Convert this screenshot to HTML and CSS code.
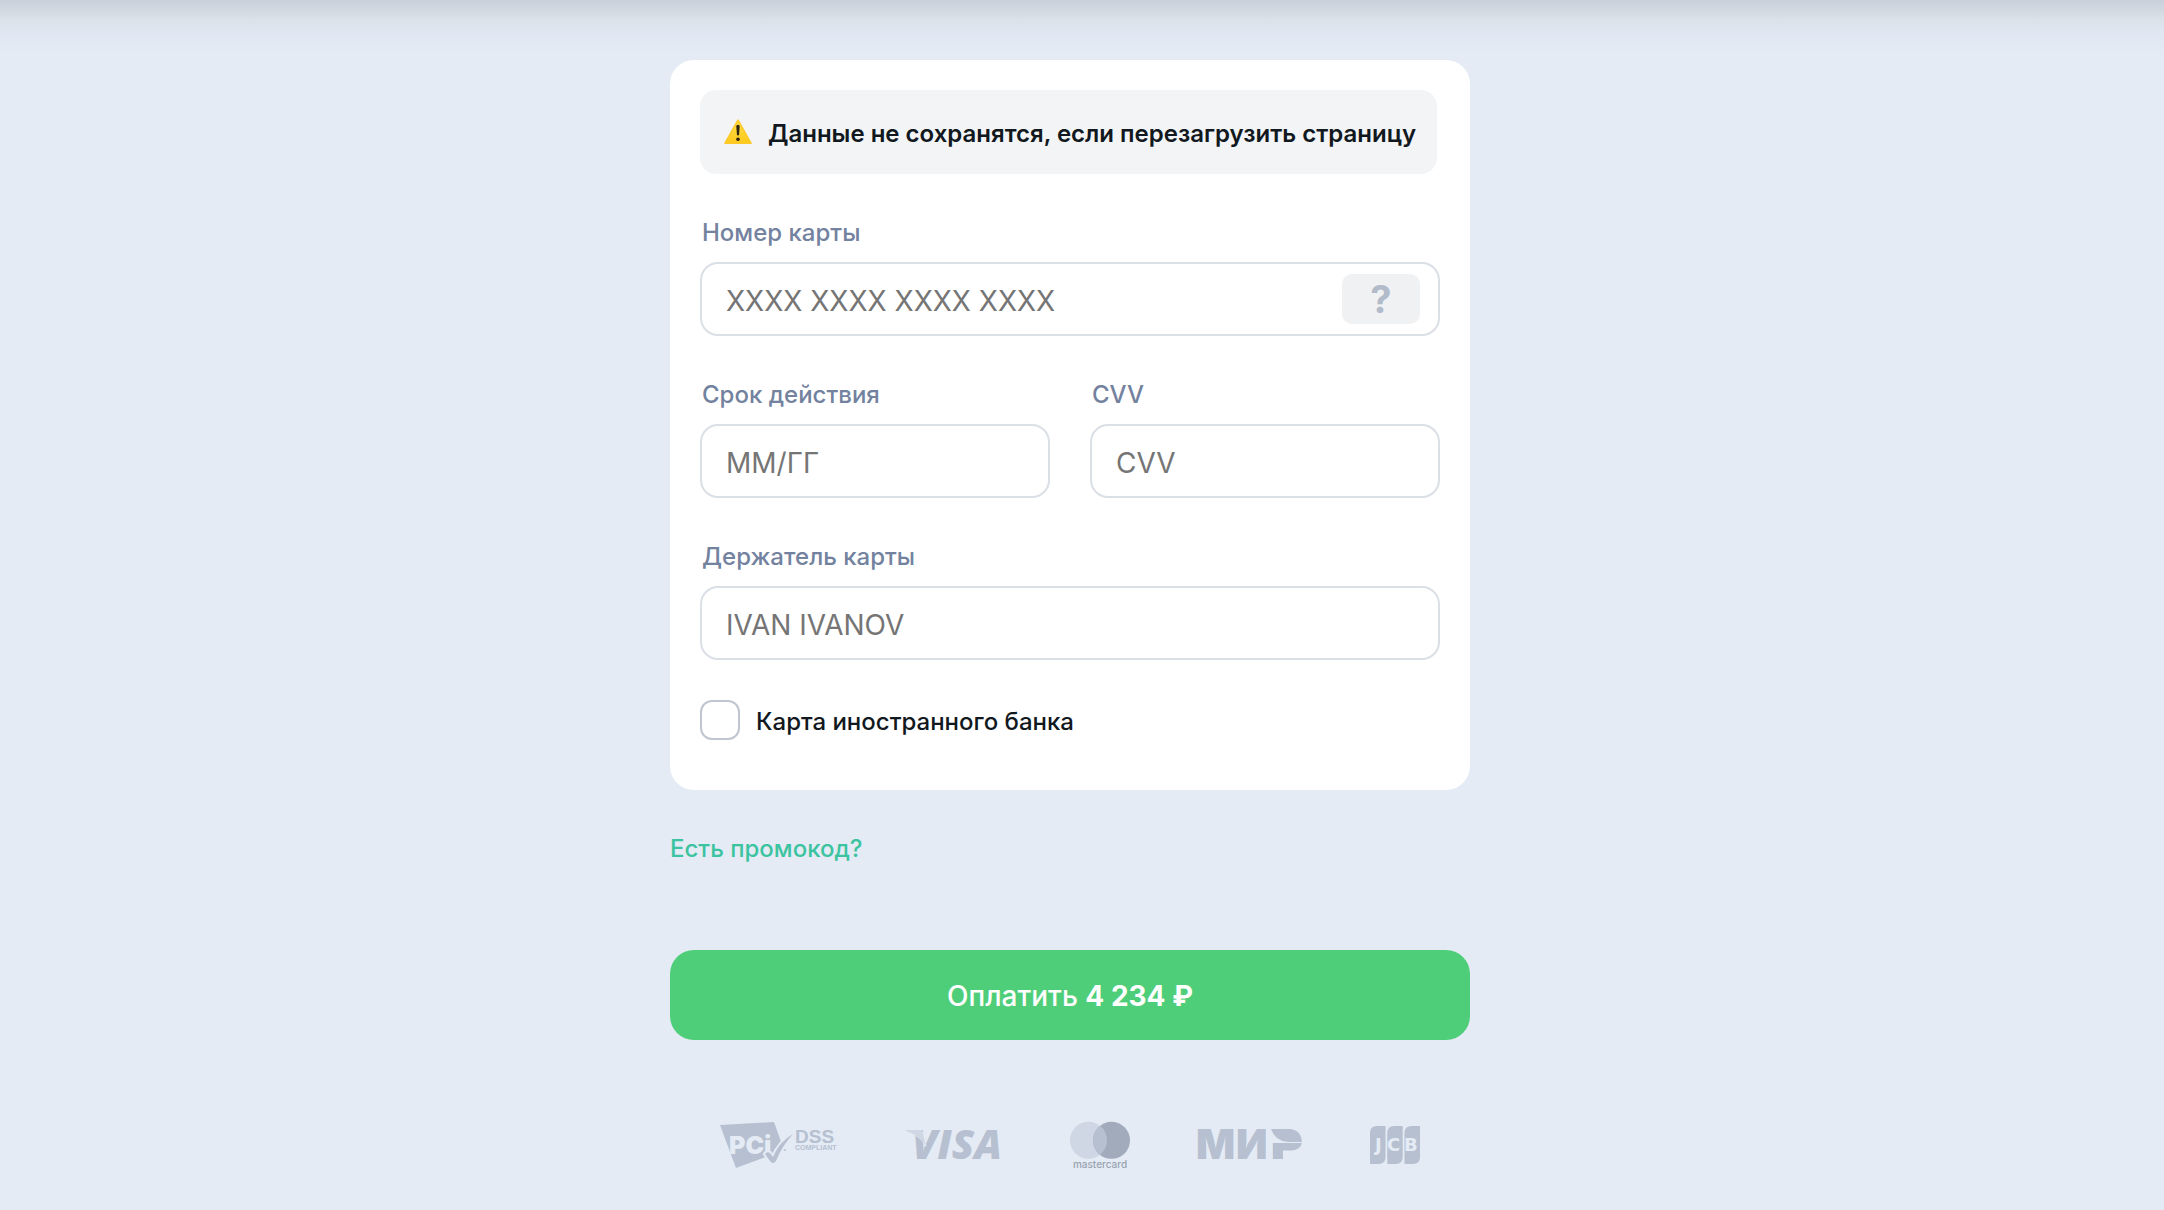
FILE: index.html
```html
<!DOCTYPE html>
<html lang="ru">
<head>
  <meta charset="UTF-8" />
  <meta name="viewport" content="width=device-width, initial-scale=1.0"/>
  <title>Оплата картой</title>
  <link rel="stylesheet" href="styles.css">
</head>
<body>

<main class="page">
  <form class="payment">
    <div class="card">
      <div class="alert">
        <svg class="alert-icon" viewBox="0 0 28 26" aria-hidden="true">
          <defs>
            <linearGradient id="warn" x1="0" y1="0" x2="0" y2="1">
              <stop offset="0" stop-color="#fee04a"/>
              <stop offset="1" stop-color="#fdc81a"/>
            </linearGradient>
          </defs>
          <path d="M14 1.2 27 24.2H1Z" fill="url(#warn)" stroke="#fcc92a" stroke-width="1.6" stroke-linejoin="round"/>
          <path d="M12.3 7.400a1.700 1.700 0 0 1 3.400 0l-.7 8.800h-2Z" fill="#2b2410"/>
          <circle cx="14" cy="20.2" r="1.8" fill="#2b2410"/>
        </svg>
        <span>Данные не сохранятся, если перезагрузить страницу</span>
      </div>

      <div class="field">
        <label for="number">Номер карты</label>
        <div class="input-wrap">
          <input type="text" id="number" placeholder="XXXX XXXX XXXX XXXX">
          <button type="button" class="hint">?</button>
        </div>
      </div>

      <div class="row">
        <div class="field">
          <label for="expiry">Срок действия</label>
          <input type="text" id="expiry" placeholder="ММ/ГГ">
        </div>
        <div class="field">
          <label for="cvv">CVV</label>
          <input type="text" id="cvv" placeholder="CVV">
        </div>
      </div>

      <div class="field">
        <label for="holder">Держатель карты</label>
        <input type="text" id="holder" placeholder="IVAN IVANOV">
      </div>

      <label class="check" for="foreign">
        <input type="checkbox" id="foreign">
        <span>Карта иностранного банка</span>
      </label>
    </div>

    <a class="promo" href="#">Есть промокод?</a>

    <button type="submit" class="pay">Оплатить <b>4 234 ₽</b></button>
  </form>

  <div class="logos">
    <!-- PCI DSS -->
    <svg width="118" height="50" viewBox="0 0 118 50">
      <path d="M0 5 54 2 64 30 43 38 16 48Z" fill="#b6c0d0"/>
      <text class="pci" x="9" y="34">PCi</text>
      <path d="M45 34q2-3 5-1l3 4q6-15 20-23-11 12-17 27-3 4-6 0Z" fill="#b6c0d0" stroke="#e4ebf5" stroke-width="4" paint-order="stroke"/>
      <circle cx="65" cy="30" r="1" fill="#b6c0d0"/>
      <text class="dss" x="75" y="23">DSS</text>
      <text class="compliant" x="75" y="30">COMPLIANT</text>
    </svg>
    <!-- Visa -->
    <svg width="96" height="50" viewBox="0 0 96 50">
      <text class="visa" x="6" y="39">VISA</text>
      <path d="M0 10H13q3 0 4 4l3 12Q14 15 0 11Z" fill="#cfd7e5" stroke="#e4ebf5" stroke-width="1" paint-order="stroke"/>
    </svg>
    <!-- Mastercard -->
    <svg width="60" height="50" viewBox="0 0 60 50">
      <circle cx="18.5" cy="20.3" r="18.5" fill="#cfd7e5"/>
      <circle cx="41.5" cy="20.3" r="18.5" fill="#a1abbc"/>
      <path d="M30 5.8a18.5 18.5 0 0 1 0 29 18.5 18.5 0 0 1 0-29Z" fill="#b6c0d0"/>
      <text class="mastercard" x="30" y="48">mastercard</text>
    </svg>
    <!-- Мир -->
    <svg width="104" height="50" viewBox="0 0 104 50">
      <text class="mir" y="39" x="-2 38 73">МИР</text>
      <path d="M72 8H106V23H72Z" fill="#e4ebf5"/>
      <path d="M73 9H92Q103 10 104 22H90Q77 21 73 9Z" fill="#b6c0d0"/>
      <path d="M75 23H104Q102 30 94 30.500H85V39H75Z" fill="#b6c0d0"/>
    </svg>
    <!-- JCB -->
    <svg width="50" height="50" viewBox="0 0 50 50">
      <g fill="#b6c0d0">
        <path d="M0 13q0-7 7-7h8.500v31q0 7-7 7H0Z"/>
        <path d="M17.300 13q0-7 7-7h8.400v31q0 7-7 7h-8.400Z"/>
        <path d="M34.500 13q0-7 7-7H50v31q0 7-7 7h-8.500Z"/>
      </g>
      <text class="jcb" y="31" x="5 17 34">JCB</text>
    </svg>
  </div>
</main>

</body>
</html>
```

FILE: styles.css
```css
* {
  box-sizing: border-box;
}

body {
  margin: 0;
  min-height: 100vh;
  padding: 60px 24px 40px 0;
  font-family: Inter, 'Liberation Sans', sans-serif;
  font-size: 24px;
  line-height: 30px;
  font-weight: 500;
  color: #111820;
  background: linear-gradient(#c9d0db 0, #d3dae1 12px, #dbe2ea 20px, #e0e7f2 34px, #e4ebf5 54px) no-repeat #e4ebf5;
}

.page {
  max-width: 800px;
  margin: 0 auto;
}

.payment {
  display: flex;
  flex-direction: column;
}

.card {
  background: #fff;
  border-radius: 24px;
  padding: 30px 30px 50px;
}

.alert {
  display: flex;
  align-items: center;
  gap: 16px;
  min-height: 84px;
  margin-right: 3px;
  padding: 0 20px 0 24px;
  border-radius: 16px;
  background: #f3f4f6;
  font-weight: 600;
  white-space: nowrap;
}

.alert span,
.check span {
  padding-top: 4px;
}

.alert-icon {
  width: 28px;
  height: 26px;
  flex: none;
}

.row {
  display: flex;
  gap: 40px;
}

.field {
  flex: 1;
  min-width: 0;
  margin-top: 44px;
}

.field label {
  display: block;
  margin-bottom: 14px;
  padding-left: 2px;
  color: #73829e;
}

.field input {
  display: block;
  width: 100%;
  height: 74px;
  padding: 4px 24px 0;
  border: 2px solid #dbdfe6;
  border-radius: 18px;
  background: #fff;
  font-family: inherit;
  font-size: 28px;
  color: #111820;
}

.field input::placeholder {
  color: #757575;
}

.input-wrap {
  position: relative;
}

.hint {
  position: absolute;
  top: 12px;
  right: 20px;
  width: 78px;
  height: 50px;
  padding: 0;
  border: 0;
  border-radius: 10px;
  background: #f0f1f3;
  color: #b1bbc9;
  font-family: inherit;
  font-size: 38px;
  font-weight: 700;
}

.check {
  display: flex;
  align-items: center;
  gap: 16px;
  margin-top: 40px;
}

.check input {
  appearance: none;
  width: 40px;
  height: 40px;
  margin: 0;
  border: 2px solid #bfc5d2;
  border-radius: 12px;
  background: #fff;
}

.check input:checked {
  background: #4fce7a;
}

.promo {
  align-self: flex-start;
  margin-top: 44px;
  color: #3cc3a0;
  text-decoration: none;
}

.pay {
  height: 90px;
  margin-top: 86px;
  padding: 2px 0 0;
  border: 0;
  border-radius: 24px;
  background: #4fce7a;
  color: #fff;
  font-family: inherit;
  font-size: 28px;
  font-weight: 500;
}

.logos {
  display: flex;
  justify-content: center;
  gap: 68px;
  margin-top: 80px;
}

.logos svg {
  overflow: visible;
}

.logos text {
  fill: #b6c0d0;
  font-weight: 700;
}

.logos .pci {
  fill: #e4ebf5;
  font-size: 25px;
  font-weight: 900;
}

.logos .dss {
  font-family: 'Liberation Sans', sans-serif;
  font-size: 19px;
}

.logos .compliant {
  font-family: 'Liberation Sans', sans-serif;
  font-size: 7px;
}

.logos .visa {
  font-family: 'Open Sans', sans-serif;
  font-size: 41px;
  font-weight: 800;
  font-style: italic;
}

.logos .mastercard {
  fill: #99a3b0;
  font-size: 10px;
  font-weight: 500;
  text-anchor: middle;
}

.logos .mir {
  font-size: 41px;
  font-weight: 900;
}

.logos .jcb {
  fill: #e4ebf5;
  font-family: 'DejaVu Sans', sans-serif;
  font-size: 18px;
}
```
